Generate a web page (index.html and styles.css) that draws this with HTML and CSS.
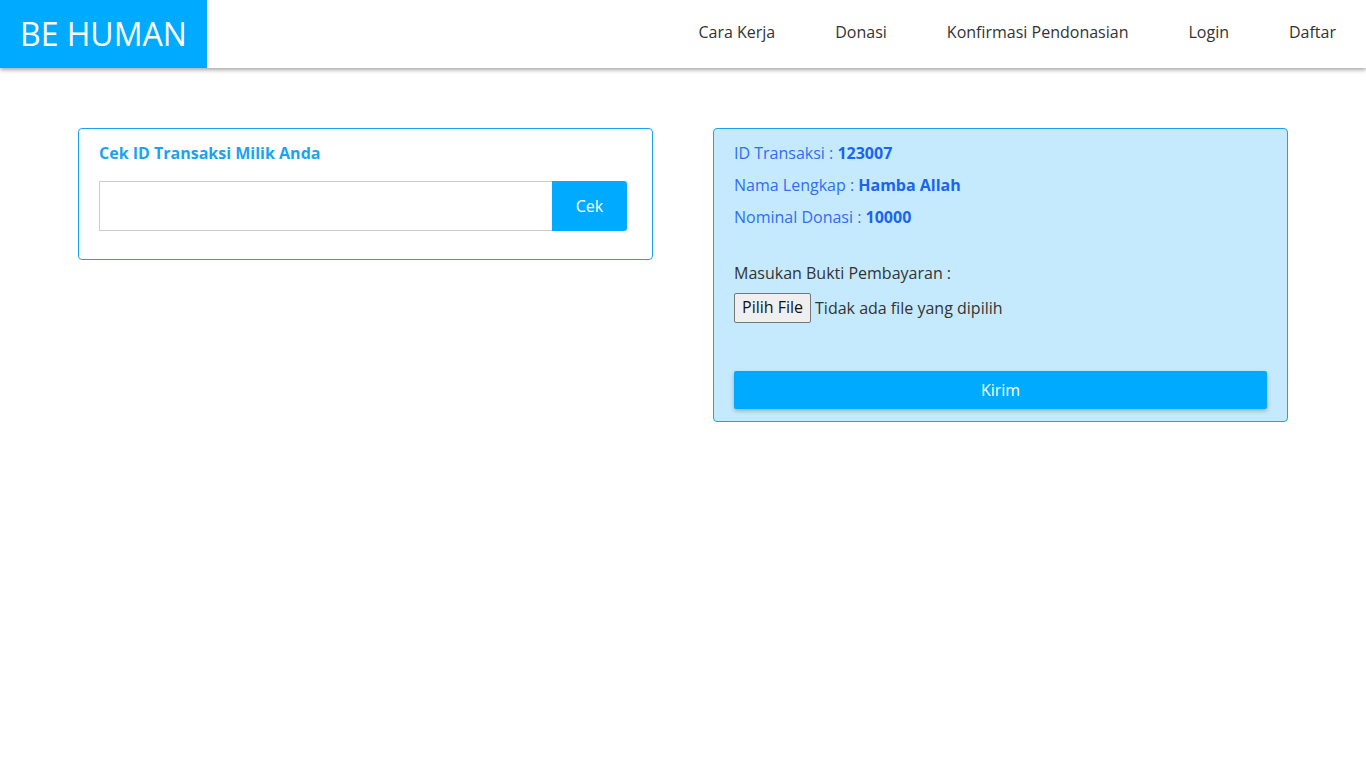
FILE: index.html
```html
<!DOCTYPE html>
<html lang="id">
<head>
<meta charset="utf-8">
<title>BE HUMAN - Konfirmasi Pendonasian</title>
<link rel="stylesheet" href="styles.css">
</head>
<body>
<header class="navbar">
  <a class="brand" href="#">BE HUMAN</a>
  <nav class="menu">
    <a href="#">Cara Kerja</a>
    <a href="#">Donasi</a>
    <a href="#">Konfirmasi Pendonasian</a>
    <a href="#">Login</a>
    <a href="#">Daftar</a>
  </nav>
</header>
<main class="content">
  <section class="card card-check">
    <h2 class="card-title">Cek ID Transaksi Milik Anda</h2>
    <form class="input-group">
      <input class="text-input" type="text">
      <button class="btn-cek" type="button">Cek</button>
    </form>
  </section>
  <section class="card card-info">
    <p class="info-line">ID Transaksi : <b>123007</b></p>
    <p class="info-line">Nama Lengkap : <b>Hamba Allah</b></p>
    <p class="info-line">Nominal Donasi : <b>10000</b></p>
    <p class="upload-label">Masukan Bukti Pembayaran :</p>
    <div class="file-row">
      <span class="file-btn">Pilih File</span>
      <span class="file-text">Tidak ada file yang dipilih</span>
    </div>
    <button class="btn-kirim" type="button">Kirim</button>
  </section>
</main>
</body>
</html>
```
FILE: styles.css
```css
* { box-sizing: border-box; }
html, body { margin: 0; padding: 0; }
body {
  font-family: "Open Sans", "Noto Sans", sans-serif;
  font-size: 16px;
  color: #333;
  background: #fff;
}
.navbar {
  height: 68px;
  display: flex;
  justify-content: space-between;
  align-items: stretch;
  background: #fff;
  box-shadow: 0 2px 4px rgba(0,0,0,0.35);
}
.brand {
  width: 207px;
  background: #00aaff;
  color: #fff;
  text-decoration: none;
  font-size: 32px;
  display: flex;
  align-items: center;
  padding-left: 20px;
  padding-bottom: 1px;
}
.menu {
  display: flex;
  align-items: center;
  padding-bottom: 4px;
}
.menu a {
  color: #333;
  text-decoration: none;
  padding: 0 30px;
  font-size: 16px;
}
.content {
  width: 1210px;
  margin: 60px auto 0;
  display: flex;
  gap: 60px;
  align-items: flex-start;
}
.card {
  flex: 0 0 575px;
  width: 575px;
  border: 1px solid #1aa3f0;
  border-radius: 4px;
}
.card-check {
  padding: 13px 25px 28px 20px;
}
.card-title {
  margin: 0 0 17px;
  font-size: 16px;
  font-weight: 700;
  color: #1aa3f0;
  line-height: 22px;
}
.input-group {
  display: flex;
  margin: 0;
}
.text-input {
  flex: 1;
  min-width: 0;
  height: 50px;
  border: 1px solid #ccc;
  border-right: none;
  border-radius: 0;
  font-family: inherit;
  font-size: 16px;
  padding: 0 12px;
  outline: none;
}
.btn-cek {
  width: 75px;
  height: 50px;
  border: none;
  background: #00aaff;
  color: #fff;
  font-family: inherit;
  font-size: 16px;
  border-radius: 0 3px 3px 0;
  padding: 0;
}
.card-info {
  background: #c6eafd;
  padding: 13px 20px 12px 20px;
}
.info-line {
  margin: 0 0 10px;
  line-height: 22px;
  color: #2f6ef5;
}
.info-line b {
  color: #1a64f2;
  font-weight: 700;
}
.upload-label {
  margin: 34px 0 0;
  line-height: 22px;
  color: #333;
}
.file-row {
  display: flex;
  align-items: center;
  margin-top: 9px;
  height: 30px;
}
.file-btn {
  display: inline-block;
  height: 30px;
  line-height: 27px;
  padding: 0 7px;
  border: 1px solid #767676;
  border-radius: 2px;
  background: #efefef;
  color: #111;
  font-size: 16px;
}
.file-text {
  margin-left: 4px;
  color: #333;
}
.btn-kirim {
  display: block;
  width: 100%;
  height: 38px;
  margin-top: 48px;
  border: none;
  border-radius: 2px;
  background: #00aaff;
  color: #fff;
  font-family: inherit;
  font-size: 16px;
  box-shadow: 0 2px 4px rgba(0,0,0,0.25);
}
```
